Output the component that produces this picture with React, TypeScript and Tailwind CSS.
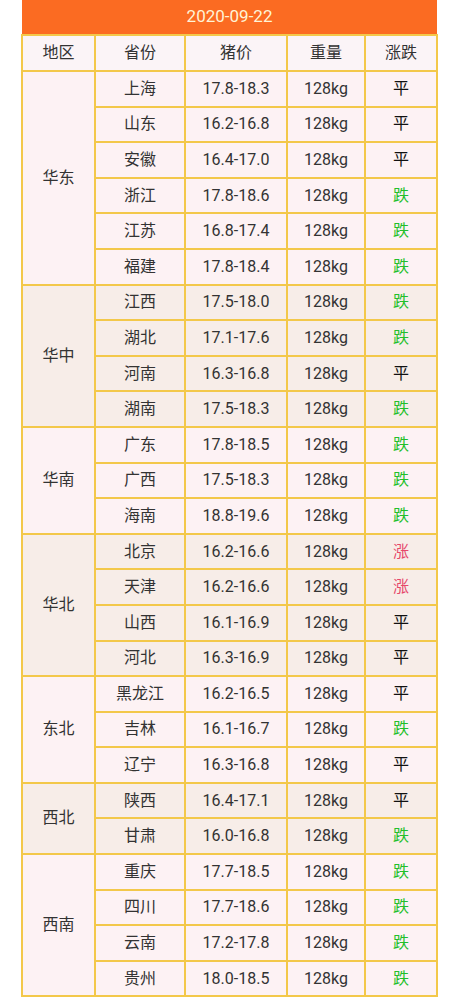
const groups: { region: string; rows: [string, string, string][] }[] = [
  {
    region: "华东",
    rows: [
      ["上海", "17.8-18.3", "平"],
      ["山东", "16.2-16.8", "平"],
      ["安徽", "16.4-17.0", "平"],
      ["浙江", "17.8-18.6", "跌"],
      ["江苏", "16.8-17.4", "跌"],
      ["福建", "17.8-18.4", "跌"],
    ],
  },
  {
    region: "华中",
    rows: [
      ["江西", "17.5-18.0", "跌"],
      ["湖北", "17.1-17.6", "跌"],
      ["河南", "16.3-16.8", "平"],
      ["湖南", "17.5-18.3", "跌"],
    ],
  },
  {
    region: "华南",
    rows: [
      ["广东", "17.8-18.5", "跌"],
      ["广西", "17.5-18.3", "跌"],
      ["海南", "18.8-19.6", "跌"],
    ],
  },
  {
    region: "华北",
    rows: [
      ["北京", "16.2-16.6", "涨"],
      ["天津", "16.2-16.6", "涨"],
      ["山西", "16.1-16.9", "平"],
      ["河北", "16.3-16.9", "平"],
    ],
  },
  {
    region: "东北",
    rows: [
      ["黑龙江", "16.2-16.5", "平"],
      ["吉林", "16.1-16.7", "跌"],
      ["辽宁", "16.3-16.8", "平"],
    ],
  },
  {
    region: "西北",
    rows: [
      ["陕西", "16.4-17.1", "平"],
      ["甘肃", "16.0-16.8", "跌"],
    ],
  },
  {
    region: "西南",
    rows: [
      ["重庆", "17.7-18.5", "跌"],
      ["四川", "17.7-18.6", "跌"],
      ["云南", "17.2-17.8", "跌"],
      ["贵州", "18.0-18.5", "跌"],
    ],
  },
];

function trendClass(t: string) {
  if (t === "跌") return "text-[#22bf2a]";
  if (t === "涨") return "text-[#e6476a]";
  return "text-[#111]";
}

const cell = "border-2 border-[#f3c84a] text-center align-middle p-0";

export default function App() {
  return (
    <div
      className="min-h-[1000px] bg-white px-[21px] text-[16px] text-[#333]"
      style={{ fontFamily: 'Roboto, "Noto Sans CJK SC", sans-serif' }}
    >
      <table className="w-[415px] table-fixed border-collapse">
        <colgroup>
          <col className="w-[73px]" />
          <col className="w-[90px]" />
          <col className="w-[102px]" />
          <col className="w-[78px]" />
          <col className="w-[72px]" />
        </colgroup>
        <thead>
          <tr className="h-[35px]">
            <th
              colSpan={5}
              className="bg-[#fb6b22] p-0 text-center text-[17px] font-normal text-[#fff3d6]"
            >
              2020-09-22
            </th>
          </tr>
          <tr className="h-[36px] bg-[#fbf4f7]">
            <th className={`${cell} font-normal`}>地区</th>
            <th className={`${cell} font-normal`}>省份</th>
            <th className={`${cell} font-normal`}>猪价</th>
            <th className={`${cell} font-normal`}>重量</th>
            <th className={`${cell} font-normal`}>涨跌</th>
          </tr>
        </thead>
        <tbody>
          {groups.map((g, gi) => {
            const bg = gi % 2 === 0 ? "bg-[#fdf2f4]" : "bg-[#f7ede8]";
            return g.rows.map((r, ri) => (
              <tr key={g.region + r[0]} className={`h-[35.6px] ${bg}`}>
                {ri === 0 && (
                  <td rowSpan={g.rows.length} className={cell}>
                    {g.region}
                  </td>
                )}
                <td className={cell}>{r[0]}</td>
                <td className={cell}>{r[1]}</td>
                <td className={cell}>128kg</td>
                <td className={`${cell} ${trendClass(r[2])}`}>{r[2]}</td>
              </tr>
            ));
          })}
        </tbody>
      </table>
    </div>
  );
}
